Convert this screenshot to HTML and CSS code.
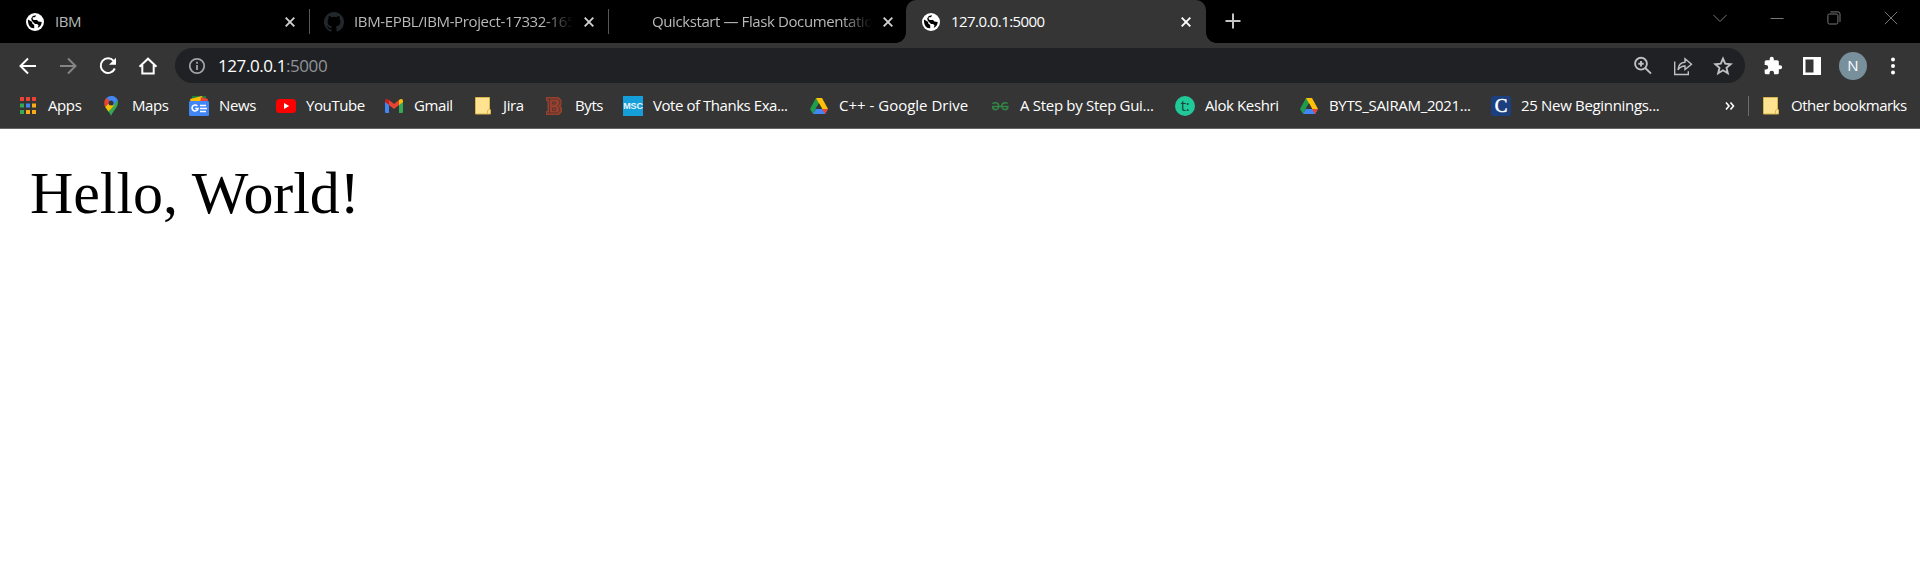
FILE: index.html
```html
<!DOCTYPE html>
<html lang="en">
<head>
<meta charset="utf-8">
<title>127.0.0.1:5000</title>
<link rel="stylesheet" href="styles.css">
</head>
<body>
<svg class="defs" width="0" height="0">
  <symbol id="globe" viewBox="0 0 18 18"><circle cx="9" cy="9" r="9" fill="#fff"/><path class="land" d="M2 6.5 6.2 9v1.600l2 1.400v3.200C4.500 15.600 1.700 12.600 2 6.500ZM10.200 2.300 9 4.200H6.700v1.900l1 1h3.400l1.300 1.500 3.300.3C15.600 11.600 14 13.900 11.600 14.900l1-2.300-1.500-1.500H9L5.800 7.800 5.200 5.500 6.800 3Z"/></symbol>
  <symbol id="cross" viewBox="0 0 10 10"><path d="M.7.7l8.600 8.600M9.300.7.7 9.300" fill="none" stroke="currentColor" stroke-width="1.900"/></symbol>
  <symbol id="folder" viewBox="0 0 20 20"><path d="M2.500 1.500h14v11.500l1 1v4h-15Z" fill="#ffe391" stroke="#d9b64b"/><path d="M14.500 17.500v-3l2-1.500" fill="none" stroke="#d9b64b"/></symbol>
  <symbol id="drive" viewBox="0 0 20 18"><path d="M7 1h6L7.300 11 4 17 1 12Z" fill="#1e9e4a"/><path d="M7 1h6l-3 5Z" fill="#188038"/><path d="M7 1h6l6 11h-6Z" fill="#ffc107"/><path d="M6.800 12H19l-3 5H4Z" fill="#4285f4"/><path d="M13 12h6l-3 5Z" fill="#ea4335"/><path d="m10 6.200 3.300 5.800H6.700Z" fill="#353535"/></symbol>
</svg>

<header class="browser">
  <div class="tabs">
    <div class="tab first"><svg class="fav"><use href="#globe"/></svg><span class="title">IBM</span><svg class="close"><use href="#cross"/></svg></div>
    <div class="tab"><svg class="fav github" viewBox="0 0 16 16"><path fill="#22272c" d="M8 0C3.580 0 0 3.580 0 8c0 3.540 2.290 6.530 5.470 7.590.4.070.55-.17.55-.38 0-.19-.01-.82-.01-1.490-2.010.37-2.530-.49-2.690-.94-.09-.23-.48-.94-.82-1.130-.28-.15-.68-.52-.01-.53.63-.01 1.080.58 1.230.82.72 1.210 1.870.87 2.330.66.07-.52.28-.87.51-1.070-1.780-.2-3.640-.89-3.640-3.950 0-.87.31-1.590.82-2.150-.08-.2-.36-1.020.08-2.120 0 0 .67-.21 2.200.82a7.400 7.400 0 0 1 4 0c1.530-1.040 2.200-.82 2.200-.82.44 1.100.16 1.920.08 2.120.51.56.82 1.270.82 2.150 0 3.070-1.870 3.750-3.650 3.950.29.25.54.73.54 1.480 0 1.070-.01 1.930-.01 2.200 0 .21.15.46.55.38A8 8 0 0 0 16 8c0-4.420-3.580-8-8-8Z"/></svg><span class="title fade project">IBM-EPBL/IBM-Project-17332-165</span><svg class="close"><use href="#cross"/></svg></div>
    <div class="tab plain"><span class="fav"></span><span class="title fade flask">Quickstart — Flask Documentatio</span><svg class="close"><use href="#cross"/></svg></div>
    <div class="tab active"><svg class="fav"><use href="#globe"/></svg><span class="title">127.0.0.1:5000</span><svg class="close"><use href="#cross"/></svg></div>
    <svg class="newtab" viewBox="0 0 16 16"><path d="M8 .5v15M.5 8h15" stroke="#c4c4c4" stroke-width="2"/></svg>
    <div class="winbtns">
      <svg width="14" height="14" viewBox="0 0 14 14"><path d="m.5 4 6.500 6.500L13.500 4"/></svg>
      <svg width="14" height="14" viewBox="0 0 14 14"><path d="M.5 7.500h13"/></svg>
      <svg width="14" height="14" viewBox="0 0 14 14"><rect x=".9" y="3" width="10" height="10" rx="1.500"/><path d="M3.500.9h7.500a2 2 0 0 1 2 2v8"/></svg>
      <svg width="14" height="14" viewBox="0 0 14 14"><path d="m.8.8 12.400 12.400M13.200.8.8 13.200"/></svg>
    </div>
  </div>

  <div class="toolbar">
    <nav class="nav">
      <svg viewBox="0 0 20 20"><path d="M18 10H3M10 2.500 2.500 10l7.500 7.500"/></svg>
      <svg class="dim" viewBox="0 0 20 20"><path d="M2 10h15M10 2.500l7.500 7.500-7.500 7.500"/></svg>
      <svg viewBox="0 0 20 20"><path d="M16.800 12.500a7.300 7.300 0 1 1-1.200-7.600l1.400 1.600"/><path d="M18 1.700v7h-7Z" class="solid"/></svg>
      <svg viewBox="0 0 20 20"><path d="M1.500 10.800 10 2.700l8.500 8.100M4.300 9v8.500h11.400V9"/></svg>
    </nav>
    <div class="omnibox">
      <svg class="info" viewBox="0 0 18 18"><circle cx="9" cy="9" r="7.200"/><path d="M9 8v5M9 4.800v2"/></svg>
      <span class="url">127.0.0.1<span class="port">:5000</span></span>
      <div class="actions">
        <svg viewBox="0 0 20 20"><circle cx="8" cy="7.700" r="5.900"/><path d="m12.300 12 5.700 5.700M8 5v5.400M5.300 7.700h5.400"/></svg>
        <svg viewBox="0 0 20 20"><path class="thin" d="M1.700 5.500v13h13.600v-3.300M5 14c.3-5 2.500-7.400 7-7.700V2.800L18.500 8.200 12 13.600V10c-3.300.1-5.400 1.300-7 4Z"/></svg>
        <svg viewBox="0 0 20 20"><path d="m10 2.700 2.200 5 5.500.5-4.200 3.600 1.300 5.400L10 14.300l-4.800 2.900 1.300-5.400-4.200-3.600 5.500-.5Z"/></svg>
      </div>
    </div>
    <div class="tools">
      <svg width="20" height="20" viewBox="0 0 24 24"><path fill="#fff" d="M20.500 11H19V7a2 2 0 0 0-2-2h-4V3.500a2.500 2.500 0 0 0-5 0V5H4a2 2 0 0 0-2 2v3.800h1.500a2.700 2.700 0 0 1 0 5.400H2V20a2 2 0 0 0 2 2h3.800v-1.500a2.700 2.700 0 0 1 5.400 0V22H17a2 2 0 0 0 2-2v-4h1.500a2.500 2.500 0 0 0 0-5Z"/></svg>
      <svg width="18" height="18" viewBox="0 0 18 18"><path fill="#fff" d="M0 0h18v18H0ZM2.500 2.500v13h8v-13Z" fill-rule="evenodd"/></svg>
      <span class="avatar">N</span>
      <svg width="4" height="18" viewBox="0 0 4 18"><g fill="#fff"><circle cx="2" cy="2.500" r="2"/><circle cx="2" cy="9" r="2"/><circle cx="2" cy="15.500" r="2"/></g></svg>
    </div>
  </div>

  <div class="bookmarks">
    <a class="bm apps"><svg viewBox="0 0 20 20"><path fill="#ea4335" d="M2 1h4v4H2zM8 1h4v4H8zM14 1h4v4h-4z"/><path fill="#34a853" d="M2 7.500h4v4H2zM2 14h4v4H2z"/><path fill="#4285f4" d="M8 7.500h4v4H8z"/><path fill="#fbab18" d="M14 7.500h4v4h-4zM8 14h4v4H8zM14 14h4v4h-4z"/></svg><span>Apps</span></a>
    <a class="bm maps"><svg viewBox="0 0 20 20"><path fill="#34a853" d="M9 20c-.8-3-5.700-7.500-6.500-11L15.700 4C17.500 11 10.500 15 9 20Z"/><path fill="#fbbc04" d="M3 10.500 9.500 3l3 6-6 6.500Z"/><path fill="#ea4335" d="M2.300 8C2 5 3 3 4.700 1.800L9 5 3.300 11Z"/><path fill="#4285f4" d="M4.500 2C8-1.500 14.200-.2 15.700 4L11 10 8 5Z"/><circle cx="9" cy="7" r="2.500" fill="#353535"/></svg><span>Maps</span></a>
    <a class="bm news"><svg viewBox="0 0 20 20"><path fill="#188038" d="M3 0h14v7H3z"/><path fill="#fbbc04" d="m1 3 12-3 2 7H2z"/><path fill="#ea4335" d="m12 1 7 2-1 4h-7z"/><rect y="5" width="20" height="15" rx="1.200" fill="#4285f4"/><path d="M8.300 10A3 3 0 1 0 9 12.500H6.200M11 9.500h6M11 12.500h7M11 15.500h6" fill="none" stroke="#fff" stroke-width="1.600"/></svg><span>News</span></a>
    <a class="bm youtube"><svg viewBox="0 0 20 20"><rect y="3" width="20" height="14" rx="3.500" fill="#f00"/><path d="m8 7 5.200 3L8 13Z" fill="#fff"/></svg><span>YouTube</span></a>
    <a class="bm gmail"><svg viewBox="0 0 20 20"><path fill="#4285f4" d="M1 5h4v12H2a1 1 0 0 1-1-1Z"/><path fill="#34a853" d="M15 5h4v11a1 1 0 0 1-1 1h-3Z"/><path fill="#ea4335" d="m5 4 5 4 5-4v5l-5 4-5-4Z"/><path fill="#c5221f" d="M1 5c0-2 2-3 4-1v5L1 6Z"/><path fill="#fbbc04" d="M19 5c0-2-2-3-4-1v5l4-3Z"/></svg><span>Gmail</span></a>
    <a class="bm jira"><svg><use href="#folder"/></svg><span>Jira</span></a>
    <a class="bm byts"><svg viewBox="0 0 20 20"><path d="M1 1h12.500l3 3v4.500L15.500 10l1.500 1.500V16l-3 3H1v-4h1.500V5H1Z" fill="#96402d"/><path d="M2 3h10.500l2.200 1.900V8l-2.200 2 2.200 2v3.200L12.500 17H2M4.500 17V3M7.500 6h3v2h-3ZM7.500 12h3v2.500h-3Z" fill="none" stroke="#4a342f" stroke-width=".8"/></svg><span>Byts</span></a>
    <a class="bm thanks"><i class="msc">MSC</i><span>Vote of Thanks Exa...</span></a>
    <a class="bm cpp"><svg><use href="#drive"/></svg><span>C++ - Google Drive</span></a>
    <a class="bm step"><svg viewBox="0 0 20 20"><path d="M2.500 7.700c2-1.500 5.800-1.300 6.200 1.700.3 2.500-1.300 4.200-3.200 4.200-1.600 0-2.800-1-2.800-3.100H17.800c0 2.100-1.200 3.100-2.800 3.100-1.900 0-3.500-1.700-3.200-4.200.4-3 4.200-3.200 5.700-1.700" fill="none" stroke="#328345" stroke-width="1.700"/></svg><span>A Step by Step Gui...</span></a>
    <a class="bm alok"><i class="teal">t:</i><span>Alok Keshri</span></a>
    <a class="bm sairam"><svg><use href="#drive"/></svg><span>BYTS_SAIRAM_2021...</span></a>
    <a class="bm begin"><i class="cbox">C</i><span>25 New Beginnings...</span></a>
    <div class="overflow">
      <svg class="more" viewBox="0 0 10 8"><path d="m1 .5 3 3.500-3 3.500M5.500.5l3 3.500-3 3.500"/></svg>
      <a class="bm other"><svg><use href="#folder"/></svg><span>Other bookmarks</span></a>
    </div>
  </div>
</header>

<main class="page">Hello, World!</main>
</body>
</html>
```

FILE: styles.css
```css
* { box-sizing: border-box; }
body { margin: 0; background: #fff; font: 15px/20px "Open Sans", "Noto Sans", sans-serif; }
svg { display: block; flex: none; }
.defs { position: absolute; }
.browser { height: 129px; background: #353535; border-bottom: 1px solid #656565; }

.tabs { display: flex; height: 43px; background: #000; }
.tab { display: flex; align-items: center; width: 299px; padding: 0 15px 0 14px; color: #b9b9b9; }
.tab.first { width: 310px; padding-left: 26px; }
.tab::after { content: ""; flex: none; width: 1px; height: 25px; margin-left: 14px; margin-right: -15px; background: #575757; }
.tab.plain::after, .tab.active::after { background: transparent; }
.fav { width: 18px; height: 18px; flex: none; }
.github { width: 20px; height: 20px; }
.first .title { margin-left: 11px; }
.title { flex: 1; margin-left: 10px; padding-bottom: 2px; white-space: nowrap; letter-spacing: -.5px; }
.project { letter-spacing: -.36px; }
.flask { letter-spacing: -.4px; }
.plain .title { margin-left: 11px; }
.fade { min-width: 0; -webkit-mask-image: linear-gradient(90deg, #000 86%, transparent); mask-image: linear-gradient(90deg, #000 86%, transparent); }
.close { width: 10px; height: 10px; margin-left: 11px; color: #d0d0d0; }
.tab.active { position: relative; width: 300px; padding-left: 16px; color: #fff; background: #353535; border-radius: 10px 10px 0 0; margin-left: -2px; }
.active .title { margin-left: 11px; letter-spacing: -.57px; }
.active .close { color: #fff; }
.active .land { fill: #353535; }
.tab.active::before { content: ""; position: absolute; left: -10px; right: -10px; bottom: 0; height: 10px; background: radial-gradient(circle at 0 0, transparent 9.5px, #353535 10px) left/10px 10px no-repeat, radial-gradient(circle at 100% 0, transparent 9.500px, #353535 10px) right/10px 10px no-repeat; }
.newtab { width: 16px; height: 16px; margin: 13px 0 0 19px; }
.winbtns { display: flex; gap: 43px; margin: 11px 22px 0 auto; fill: none; stroke: #777; }
.winbtns svg { stroke-width: 1; }

.toolbar { display: flex; height: 44px; padding: 5px 16px 4px 18px; }
.nav { display: flex; align-items: center; gap: 20px; width: 157px; stroke: #fff; fill: none; stroke-width: 2; }
.nav svg { width: 20px; height: 20px; }
.nav .dim { stroke: #858585; }
.nav .solid { fill: #fff; stroke: none; }
.omnibox { display: flex; align-items: center; flex: 1; height: 35px; padding: 0 12px 0 13px; border-radius: 18px; background: #202124; }
.info { width: 18px; height: 18px; fill: none; stroke: #a0a3a7; stroke-width: 1.800; }
.url { margin-left: 12px; font-size: 17px; letter-spacing: -.42px; color: #fff; }
.port { color: #919498; }
.actions { display: flex; gap: 20px; margin-left: auto; fill: none; stroke: #bdc1c6; stroke-width: 1.900; }
.actions svg { width: 20px; height: 20px; }
.thin { stroke-width: 1.400; }
.tools { display: flex; align-items: center; width: 159px; height: 35px; padding-left: 18px; }
.tools svg:nth-child(2) { margin-left: 20px; }
.avatar { width: 28px; height: 28px; margin: 0 24px 0 18px; border-radius: 50%; background: #78909c; color: #fff; text-align: center; line-height: 27px; font-size: 15px; }

.bookmarks { display: flex; align-items: center; height: 38px; padding-left: 18px; color: #fff; }
.bm { display: flex; align-items: center; gap: 10px; flex: none; white-space: nowrap; letter-spacing: -.4px; }
.bm span { padding-bottom: 2px; }
.bm svg, .bm i { width: 20px; height: 20px; flex: none; }
.bm i { font-style: normal; text-align: center; }
.apps { width: 84px; }
.maps { width: 87px; }
.news { width: 87px; }
.youtube { width: 108px; }
.gmail { width: 89px; }
.jira { width: 72px; }
.byts { width: 78px; }
.thanks { width: 186px; letter-spacing: -.45px; }
.cpp { width: 181px; letter-spacing: 0; }
.step { width: 185px; letter-spacing: -.3px; }
.alok { width: 124px; }
.sairam { width: 192px; letter-spacing: -.33px; }
.begin { width: 171px; letter-spacing: -.32px; }
.bm .msc { background: #159fda; color: #e6f5fc; font: bold 9px/20px "Liberation Sans", sans-serif; letter-spacing: -.2px; }
.bm .teal { border-radius: 50%; background: #20c997; color: #16413a; font: 15px/18px "Open Sans", sans-serif; }
.bm .cbox { border-radius: 3px; background: #1c3f7f; color: #fff; font: 19px/20px "Liberation Serif", serif; -webkit-text-stroke: .5px #fff; }
.overflow { display: flex; align-items: center; margin-left: auto; padding-right: 12px; }
.more { width: 10px; height: 8px; margin-right: 13px; fill: none; stroke: #fff; stroke-width: 1.600; }
.other { width: 160px; height: 20px; padding-left: 12px; border-left: 1px solid #6b6b6b; letter-spacing: -.5px; }

.page { padding: 30px; font: 60px/69px "Liberation Serif", serif; letter-spacing: -.08px; color: #000; }
```
